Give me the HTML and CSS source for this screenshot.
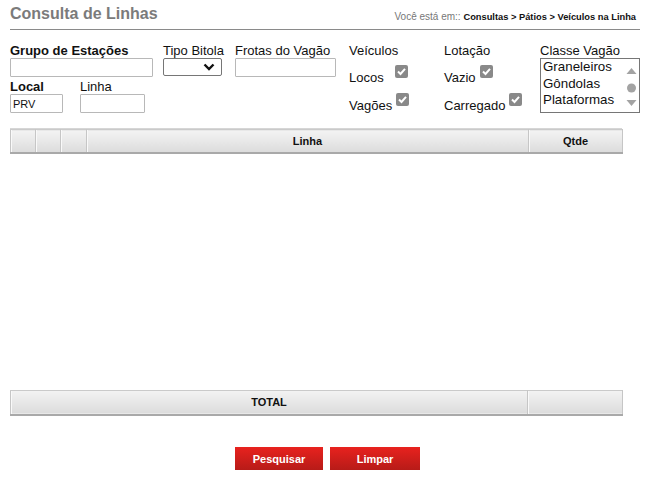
FILE: index.html
```html
<!DOCTYPE html>
<html lang="pt-BR">
<head>
<meta charset="utf-8">
<title>Consulta de Linhas</title>
<link rel="stylesheet" href="styles.css">
</head>
<body>
<div class="page">
  <div class="head">
    <h1 class="title">Consulta de Linhas</h1>
    <div class="crumb"><span class="crumb-lead">Você está em::</span> <b>Consultas &gt; Pátios &gt; Veículos na Linha</b></div>
  </div>

  <div class="filters">
    <div class="left">
      <div class="frow">
        <div class="field f-grupo">
          <label class="lbl bold">Grupo de Estações</label>
          <input class="txt w-grupo" type="text">
        </div>
        <div class="field f-tipo">
          <label class="lbl">Tipo Bitola</label>
          <div class="sel">
            <svg width="12" height="8" viewBox="0 0 12 8"><path d="M1.5 1.5 L6 6 L10.5 1.5" fill="none" stroke="#111" stroke-width="2.4"/></svg>
          </div>
        </div>
        <div class="field f-frotas">
          <label class="lbl">Frotas do Vagão</label>
          <input class="txt w-frotas" type="text">
        </div>
      </div>
      <div class="frow row2">
        <div class="field f-local">
          <label class="lbl bold">Local</label>
          <input class="txt w-local" type="text" value="PRV">
        </div>
        <div class="field">
          <label class="lbl">Linha</label>
          <input class="txt w-linha" type="text">
        </div>
      </div>
    </div>

    <div class="checks c-veic">
      <div class="lbl">Veículos</div>
      <div class="crow first"><span class="ctext">Locos</span><span class="chk chk-wide"><svg width="13" height="13" viewBox="0 0 13 13"><path d="M3 6.5 L5.5 9 L10 3.8" fill="none" stroke="#fff" stroke-width="2"/></svg></span></div>
      <div class="crow"><span class="ctext">Vagões</span><span class="chk"><svg width="13" height="13" viewBox="0 0 13 13"><path d="M3 6.5 L5.5 9 L10 3.8" fill="none" stroke="#fff" stroke-width="2"/></svg></span></div>
    </div>

    <div class="checks c-lot">
      <div class="lbl">Lotação</div>
      <div class="crow first"><span class="ctext">Vazio</span><span class="chk"><svg width="13" height="13" viewBox="0 0 13 13"><path d="M3 6.5 L5.5 9 L10 3.8" fill="none" stroke="#fff" stroke-width="2"/></svg></span></div>
      <div class="crow"><span class="ctext">Carregado</span><span class="chk"><svg width="13" height="13" viewBox="0 0 13 13"><path d="M3 6.5 L5.5 9 L10 3.8" fill="none" stroke="#fff" stroke-width="2"/></svg></span></div>
    </div>

    <div class="classe">
      <div class="lbl">Classe Vagão</div>
      <div class="listbox">
        <div class="items">
          <div class="item">Graneleiros</div>
          <div class="item">Gôndolas</div>
          <div class="item">Plataformas</div>
        </div>
        <div class="sbar">
          <svg width="11" height="50" viewBox="0 0 11 50">
            <path d="M0.5 13 L5.5 7 L10.5 13 Z" fill="#a3a3a3"/>
            <circle cx="5.5" cy="27" r="4.5" fill="#a3a3a3"/>
            <path d="M0.5 39 L5.5 45 L10.5 39 Z" fill="#a3a3a3"/>
          </svg>
        </div>
      </div>
    </div>
  </div>

  <table class="grid">
    <tr>
      <th class="c-a"></th>
      <th class="c-a"></th>
      <th class="c-b"></th>
      <th class="c-linha">Linha</th>
      <th class="c-qtde">Qtde</th>
    </tr>
  </table>
  <div class="grid-body"></div>
  <table class="grid grid-total">
    <tr>
      <th class="c-total">TOTAL</th>
      <th class="c-tq"></th>
    </tr>
  </table>

  <div class="actions">
    <button class="btn b-pesq" type="button">Pesquisar</button>
    <button class="btn b-limp" type="button">Limpar</button>
  </div>
</div>
</body>
</html>
```
FILE: styles.css
```css
* { box-sizing: border-box; }

body {
  margin: 0;
  background: #fff;
  color: #111;
  font-family: "Liberation Sans", Arial, sans-serif;
}

.page {
  padding: 0 0 0 10px;
  width: 650px;
}

.head {
  width: 630px;
  height: 30px;
  display: flex;
  justify-content: space-between;
  align-items: flex-start;
  border-bottom: 1px solid #8a8a8a;
}

.title {
  margin: 0;
  padding-top: 5px;
  font-size: 16px;
  line-height: 18px;
  font-weight: bold;
  color: #7b7b7b;
}

.crumb {
  padding-top: 11px;
  padding-right: 4px;
  font-size: 10px;
  line-height: 11px;
  color: #111;
}

.crumb-lead { color: #777; }
.crumb b { font-size: 9.3px; }

.filters {
  width: 612px;
  height: 99px;
  display: flex;
  padding-top: 13px;
  border-bottom: 1px solid #d6d6d6;
}

.filters > * { flex-shrink: 0; }

.left { width: 339px; }

.frow { display: flex; }
.row2 { margin-top: 2px; }

.field { display: flex; flex-direction: column; }
.f-grupo { width: 153px; }
.f-tipo { width: 72px; }
.f-local { width: 70px; }

.lbl {
  display: block;
  font-size: 13px;
  line-height: 15px;
  color: #111;
}
.bold { font-weight: bold; }

.txt {
  height: 19px;
  border: 1px solid #b8b8b8;
  border-radius: 1px;
  padding: 0 2px;
  font-family: "Liberation Sans", Arial, sans-serif;
  font-size: 11px;
  color: #111;
  background: #fff;
}
.w-grupo { width: 143px; }
.w-frotas { width: 101px; }
.w-local { width: 53px; }
.w-linha { width: 65px; }

.sel {
  width: 59px;
  height: 18px;
  border: 1px solid #767676;
  border-radius: 2px;
  display: flex;
  justify-content: flex-end;
  align-items: center;
  padding-right: 6px;
  background: #fff;
}

.checks { display: flex; flex-direction: column; }
.c-veic { width: 95px; }
.c-lot { width: 96px; }

.crow {
  display: flex;
  align-items: flex-start;
}
.crow.first {
  margin-top: 7px;
  height: 28px;
}

.ctext {
  font-size: 13px;
  line-height: 15px;
  margin-top: 5px;
}

.chk {
  width: 13px;
  height: 13px;
  margin-left: 4px;
  border-radius: 2px;
  background: #898989;
  display: block;
}
.chk svg { display: block; }
.chk-wide { margin-left: 11px; }

.classe { width: 100px; }

.listbox {
  width: 100px;
  height: 55px;
  border: 1px solid #767676;
  display: flex;
  justify-content: space-between;
}

.items { padding-left: 2px; }
.item {
  font-size: 13.33px;
  line-height: 16.7px;
  color: #111;
  white-space: nowrap;
}

.sbar {
  width: 15px;
  padding-top: 2px;
  display: flex;
  justify-content: center;
}

.grid {
  width: 612px;
  border-collapse: collapse;
  table-layout: fixed;
}

.grid th {
  height: 23px;
  padding: 0;
  background: linear-gradient(#f3f3f3, #dcdcdc);
  border-top: 1px solid #cacaca;
  border-left: 1px solid #c6c6c6;
  border-right: 1px solid #c6c6c6;
  border-bottom: 2px solid #a9a9a9;
  font-size: 11px;
  font-weight: bold;
  color: #111;
  text-align: center;
  box-shadow: inset 1px 0 0 #f9f9f9;
}

.grid-total th { height: 25px; }

.c-a { width: 25px; }
.c-b { width: 26px; }
.c-linha { width: 442px; }
.c-qtde { width: 94px; }
.c-total { width: 517px; }
.c-tq { width: 95px; }

.grid-body { height: 236px; }

.actions {
  width: 635px;
  margin-top: 31px;
  display: flex;
  justify-content: center;
  gap: 7px;
}

.btn {
  height: 23px;
  border: 0;
  padding: 0;
  background: linear-gradient(#e8221e, #b71b18);
  color: #fff;
  font-family: "Liberation Sans", Arial, sans-serif;
  font-size: 11px;
  font-weight: bold;
}
.b-pesq { width: 88px; }
.b-limp { width: 90px; }
```
